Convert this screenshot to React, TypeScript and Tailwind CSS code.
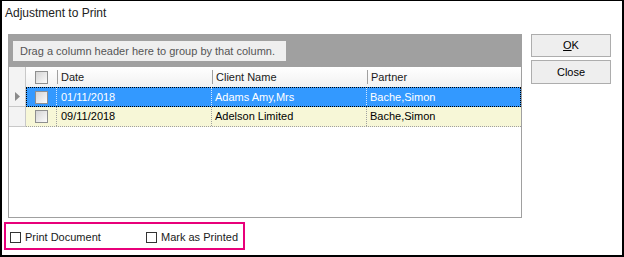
import React from "react"

interface Row {
  date: string
  client: string
  partner: string
}

const rows: Row[] = [
  { date: "01/11/2018", client: "Adams Amy,Mrs", partner: "Bache,Simon" },
  { date: "09/11/2018", client: "Adelson Limited", partner: "Bache,Simon" },
]

function GridCheck() {
  return <div className="w-[13px] h-[13px] border border-[#8e8f8f] bg-linear-to-br from-[#d4d4d4] to-[#fbfbfb]" />
}

function FlatCheck() {
  return <div className="w-[11px] h-[11px] border border-[#333] bg-white shrink-0" />
}

export default function App() {
  return (
    <div
      className="w-[624px] h-[257px] bg-white border-black border-t border-l-2 border-r-2 border-b-2 flex flex-col text-black"
      style={{ fontFamily: '"Liberation Sans", Arial, sans-serif' }}
    >
      {/* Title */}
      <div className="h-[33px] pl-[3px] pt-[5px] text-[12px] leading-[14px] text-[#222]">Adjustment to Print</div>

      <div className="flex pl-[6px]">
        {/* Grid */}
        <div className="w-[514px] h-[184px] border border-[#a0a0a0] flex flex-col text-[11px] leading-[13px]">
          {/* group panel */}
          <div className="h-[32px] bg-[#a0a0a0] pt-[6px] pl-[4px]">
            <div className="w-[273px] h-[20px] bg-[#efefef] text-[#555] flex items-center pl-[7px]">
              Drag a column header here to group by that column.
            </div>
          </div>

          {/* header */}
          <div className="h-[20px] flex bg-linear-to-b from-white to-[#f1f1f1]">
            <div className="w-[17px] border-r border-[#c8c8c8] bg-[#f3f3f3]" />
            <div className="w-[31px] flex items-center justify-center">
              <GridCheck />
            </div>
            {["Date", "Client Name", "Partner"].map((h, i) => (
              <div key={h} className={`flex items-center ${i === 2 ? "flex-1" : "w-[155px]"}`}>
                <div className="w-px h-[14px] bg-[#a0a0a0]" />
                <span className="pl-[3px] text-[#1a1a1a]">{h}</span>
              </div>
            ))}
          </div>

          {/* rows */}
          {rows.map((r, i) => {
            const selected = i === 0
            return (
              <div key={i} className="h-[20px] flex">
                <div className="w-[17px] border-r border-b border-[#c8c8c8] bg-[#f3f3f3] flex items-center justify-center">
                  {selected && (
                    <svg width="5" height="9" viewBox="0 0 5 9">
                      <path d="M0 0 L5 4.5 L0 9 Z" fill="#8a8a8a" />
                    </svg>
                  )}
                </div>
                <div
                  className={`flex-1 flex ${
                    selected
                      ? "bg-[#3399ff] text-white outline-1 outline-dotted outline-black -outline-offset-1"
                      : "bg-[#f7f7d7] text-black border-b border-dotted border-[#a0a0a0]"
                  }`}
                >
                  <div
                    className={`w-[31px] flex items-center justify-center border-r border-dotted ${
                      selected ? "border-[#d0e6ff]" : "border-[#a0a0a0]"
                    }`}
                  >
                    <GridCheck />
                  </div>
                  <div
                    className={`w-[155px] flex items-center pl-[4px] border-r border-dotted ${
                      selected ? "border-[#d0e6ff]" : "border-[#a0a0a0]"
                    }`}
                  >
                    {r.date}
                  </div>
                  <div
                    className={`w-[155px] flex items-center pl-[3px] border-r border-dotted ${
                      selected ? "border-[#d0e6ff]" : "border-[#a0a0a0]"
                    }`}
                  >
                    {r.client}
                  </div>
                  <div className="flex-1 flex items-center pl-[3px]">{r.partner}</div>
                </div>
              </div>
            )
          })}
          <div className="flex-1 bg-white" />
        </div>

        {/* Buttons */}
        <div className="ml-[9px] w-[80px] flex flex-col gap-[3px] text-[11px]">
          <button className="h-[23px] border border-[#adadad] bg-[#eeeeee] text-black">
            <span className="underline">O</span>K
          </button>
          <button className="h-[24px] border border-[#adadad] bg-[#eeeeee] text-black">Close</button>
        </div>
      </div>

      {/* Options */}
      <div className="mt-[4px] ml-[2px] w-[241px] h-[28px] border-2 border-[#e8007a] flex items-center pl-[4px] pt-[3px] text-[11px] text-[#1a1a1a]">
        <div className="w-[136px] flex items-center gap-[4px]">
          <FlatCheck />
          <span>Print Document</span>
        </div>
        <div className="flex items-center gap-[4px]">
          <FlatCheck />
          <span>Mark as Printed</span>
        </div>
      </div>
    </div>
  )
}
